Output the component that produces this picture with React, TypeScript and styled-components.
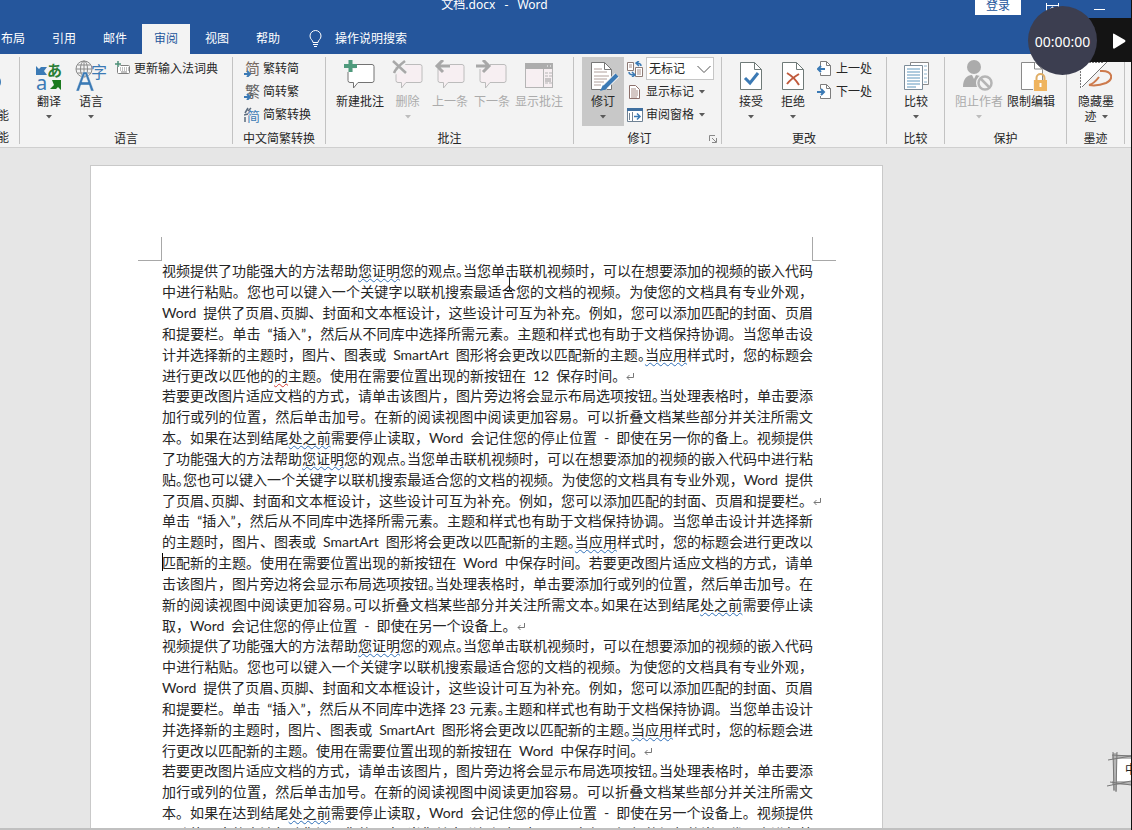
import React from "react";
import styled, { createGlobalStyle, css } from "styled-components";

const ui = '"Noto Sans", "Noto Sans CJK SC", sans-serif';

const GlobalStyle = createGlobalStyle`
  * { box-sizing: border-box; }
  html, body { margin: 0; height: 100%; overflow: hidden; }
  body { font-family: ${ui}; font-size: 12px; line-height: 16px; color: #262626; background: #e6e6e6; }
  button, select { font: inherit; color: inherit; border: 0; margin: 0; padding: 0; background: none; }
  svg { display: block; flex: none; }
`;

const Window = styled.div`
  position: relative;
  display: flex;
  flex-direction: column;
  height: 100vh;
  overflow: hidden;
  border-right: 1px solid #111;
`;

const Header = styled.header`
  flex: none;
  background: #25569c;
  color: #fff;
`;

const TitleBar = styled.div`
  display: grid;
  grid-template-columns: 1fr auto 1fr;
  height: 24px;
  padding-right: 26px;
`;

const Title = styled.h1`
  grid-column: 2;
  margin: 0;
  padding-right: 116px;
  font-size: 12px;
  line-height: 10px;
  font-weight: 400;
  white-space: pre;
`;

const TitleTools = styled.div`
  display: flex;
  justify-content: flex-end;
  align-items: flex-start;
  gap: 25px;
`;

const SignIn = styled.button`
  width: 46px;
  height: 15px;
  background: #fff;
  color: #25569c;
  line-height: 10px;
  padding-bottom: 4px;
  white-space: nowrap;
`;

const CaptionButton = styled.button`
  height: 15px;
`;

const Tabs = styled.nav`
  display: flex;
  gap: 3px;
  margin-left: -11px;
  height: 30px;
`;

const Tab = styled.button<{ $active?: boolean }>`
  padding: 0 12px;
  white-space: nowrap;
  ${(p) => p.$active && css`background: #f3f3f3; color: #25569c;`}
`;

const Search = styled.button`
  display: flex;
  align-items: center;
  gap: 13px;
  padding-left: 14px;
  white-space: nowrap;
`;

const Ribbon = styled.div`
  flex: none;
  display: flex;
  height: 94px;
  padding: 3px 0;
  background: #f3f3f3;
  border-bottom: 1px solid #cfcfcf;
`;

const GroupBox = styled.section<{ $w: number }>`
  position: relative;
  flex: none;
  display: flex;
  flex-direction: column;
  width: ${(p) => p.$w}px;
  padding-left: 8px;
  border-right: 1px solid #c2c2c2;
`;

const GroupBody = styled.div`
  flex: none;
  display: flex;
  height: 74px;
`;

const GroupLabel = styled.div<{ $launcher?: boolean }>`
  flex: none;
  padding-right: ${(p) => (p.$launcher ? 24 : 8)}px;
  text-align: center;
  white-space: nowrap;
`;

const ClippedGroup = styled.section`
  flex: none;
  display: flex;
  flex-direction: column;
  align-items: flex-end;
  gap: 6px;
  width: 20px;
  padding: 14px 10px 0 0;
  border-right: 1px solid #c2c2c2;
  & > svg { margin-bottom: 7px; }
`;

const BigButton = styled.button<{ $w: number; $pressed?: boolean; $off?: boolean }>`
  display: flex;
  flex-direction: column;
  align-items: center;
  width: ${(p) => p.$w}px;
  height: 69px;
  padding-top: 3px;
  background: ${(p) => (p.$pressed ? "#c8c8c8" : "none")};
  color: ${(p) => (p.$off ? "#ababab" : "#262626")};
  white-space: nowrap;
  & > svg:first-child { margin-bottom: 2px; }
`;

const CaretSlot = styled.span`
  display: flex;
  align-items: center;
  justify-content: center;
  gap: 5px;
  height: 14px;
`;

const SmallColumn = styled.div`
  display: flex;
  flex-direction: column;
  padding-left: 3px;
`;

const SmallButton = styled.button`
  display: flex;
  align-items: center;
  gap: 3px;
  height: 23px;
  white-space: nowrap;
  & > svg:last-child { margin-left: 2px; }
`;

const SelectRow = styled.label`
  display: flex;
  align-items: center;
  gap: 3px;
  height: 23px;
`;

const SelectBox = styled.span`
  position: relative;
  & > svg { position: absolute; right: 3px; top: 8px; pointer-events: none; }
`;

const Select = styled.select`
  appearance: none;
  display: block;
  width: 68px;
  height: 23px;
  padding-left: 2px;
  border: 1px solid #c6c6c6;
  border-radius: 0;
  background: #fff;
`;

const Launcher = styled.button`
  position: absolute;
  right: 3px;
  bottom: 0;
`;

const Workspace = styled.main`
  flex: 1;
  min-height: 0;
  overflow: hidden;
  padding: 17px 0 0 90px;
  border-bottom: 2px solid #c0c0c0;
`;

const Page = styled.article`
  max-width: 793px;
  min-height: 1120px;
  padding: 71px 46px 0 47px;
  background: #fff;
  border: 1px solid #c9c9c9;
`;

const Crops = styled.div`
  display: flex;
  justify-content: space-between;
`;

const Crop = styled.span<{ $side: "left" | "right" }>`
  width: 24px;
  height: 24px;
  border-bottom: 1px solid #a8a8a8;
  ${(p) => (p.$side === "left" ? "border-right" : "border-left")}: 1px solid #a8a8a8;
`;

const Body = styled.div`
  margin-top: -1px;
  padding: 0 23px 0 24px;
  font-family: Lato, "Noto Sans CJK SC", sans-serif;
  font-size: 14px;
  line-height: 21px;
`;

const Paragraph = styled.p`
  margin: 0 0 -1px;
`;

const Line = styled.span<{ $last: boolean }>`
  position: relative;
  display: block;
  height: 21px;
  white-space: nowrap;
  text-align: justify;
  text-align-last: ${(p) => (p.$last ? "left" : "justify")};
`;

const Wavy = styled.span<{ $color: string }>`
  text-decoration: underline wavy ${(p) => p.$color} 1px;
  text-underline-offset: 2px;
  text-decoration-skip-ink: none;
`;

const Half = styled.span`
  font-feature-settings: "halt" 1;
`;

const TextCaret = styled.i`
  position: absolute;
  left: 0;
  top: 1px;
  width: 1px;
  height: 18px;
  background: #000;
`;

const Pointer = styled.svg`
  position: absolute;
  left: 505px;
  top: 276px;
`;

const Recorder = styled.div`
  position: absolute;
  top: 6px;
  right: 0;
  display: flex;
  align-items: center;
  justify-content: space-between;
  width: 103px;
  height: 69px;
`;

const RecorderBar = styled.div`
  position: absolute;
  left: 34px;
  right: 0;
  top: 12px;
  height: 44px;
  background: #141414;
`;

const Timer = styled.time`
  position: relative;
  width: 69px;
  height: 69px;
  border-radius: 50%;
  background: #3c3e50;
  color: #fff;
  font-size: 14px;
  line-height: 71px;
  text-align: center;
`;

const Play = styled.button`
  position: relative;
  padding-right: 5px;
`;

const ImeBadge = styled.div`
  position: absolute;
  right: 0;
  bottom: 36px;
`;

const blue = "#3b7ab5";

const Caret = ({ color = "#5a5a5a" }: { color?: string }) => (
  <svg width="6" height="4" viewBox="0 0 6 4"><path d="M0 0h6L3 3.500z" fill={color} /></svg>
);

const Big = ({ children }: { children: React.ReactNode }) => (
  <svg width="32" height="32" viewBox="0 0 32 32" fill="none">{children}</svg>
);
const Small = ({ children }: { children: React.ReactNode }) => (
  <svg width="16" height="16" viewBox="0 0 16 16" fill="none">{children}</svg>
);

const TranslateIcon = () => (
  <Big>
    <path d="M3 6l3 3 2-2h6l-3 4 3 4H3z" fill={blue} />
    <text x="14" y="16" fontSize="15" fontWeight="700" fill="#2a7d35" fontFamily="Noto Sans CJK JP">あ</text>
    <text x="3" y="30" fontSize="20" fill={blue} fontFamily="Noto Sans">a</text>
    <path d="M19 20h9v10l-3-3-2 2h-6l4-4z" fill="#1b7a1f" />
  </Big>
);
const LanguageIcon = () => (
  <Big>
    <g stroke="#8a8a8a"><circle cx="9" cy="9" r="8" /><ellipse cx="9" cy="9" rx="3.500" ry="8" /><path d="M1 9h16M2.500 5h13M2.500 13h13M9 1v16" /></g>
    <path d="M1 31L8 12h4l7 19h-3l-2-6H6l-2 6zM7 22h6l-3-8z" fill={blue} stroke="#f3f3f3" strokeWidth=".4" />
    <text x="16" y="18" fontSize="16" fill={blue} fontFamily="Noto Sans CJK SC">字</text>
  </Big>
);
const KeyboardIcon = () => (
  <Small>
    <rect x="2.500" y="4.500" width="12" height="8" rx="1" fill="#fff" stroke="#808080" />
    <path d="M5 7h9M5 9h9" stroke="#808080" strokeDasharray="1 1" /><path d="M6 11h6" stroke="#808080" />
    <path d="M3 0v6M0 3h6" stroke="#f3f3f3" strokeWidth="3" /><path d="M3 0v6M0 3h6" stroke="#4d9078" strokeWidth="1.500" />
  </Small>
);
const ConvertIcon = ({ glyph, color, both }: { glyph: string; color: string; both?: boolean }) => (
  <Small>
    <text x={both ? 3 : 1} y={both ? 14 : 13} fontSize={both ? 13 : 15} fill={color} fontFamily="Noto Sans CJK SC">{glyph}</text>
    {both ? (
      <path d="M1 6l3-5M4 4l3-3M0 8l4-1M1 10v5" stroke="#5b6b7d" strokeWidth="1.500" />
    ) : (
      <><path d="M0 11h6v5H0z" fill="#f3f3f3" /><path d="M0 13h6M3 10l3 3-3 3" stroke={blue} strokeWidth="2" /></>
    )}
  </Small>
);

const Bubble = ({ off, children }: { off?: boolean; children: React.ReactNode }) => (
  <Big>
    <path d="M6 4.500h22q2 0 2 2v14q0 2-2 2H14L9.500 28v-5.500H6q-2 0-2-2v-14q0-2 2-2z" fill={off ? "#f7eff2" : "#fff"} stroke={off ? "#bcbcbc" : "#737373"} />
    {children}
  </Big>
);
const NewCommentIcon = () => (
  <Bubble><path d="M6 0v12M0 6h12" stroke="#f3f3f3" strokeWidth="6" /><path d="M6.500 0v12M0 6h13" stroke="#4f9a7c" strokeWidth="4" /></Bubble>
);
const DeleteIcon = () => (
  <Bubble off><path d="M1 1l13 12M13 1L2 13" stroke="#f3f3f3" strokeWidth="5" /><path d="M1 1l13 12M13 1C9 4 4 8 2 13" stroke="#a8a8a8" strokeWidth="2.500" /></Bubble>
);
const ArrowIcon = ({ back }: { back?: boolean }) => (
  <Bubble off>
    <g transform={back ? undefined : "translate(16 0) scale(-1 1)"}>
      <path d="M16 6H2" stroke="#f3f3f3" strokeWidth="6" />
      <path d="M16 6H3M9 0L3 6l6 6" stroke="#a8a8a8" strokeWidth="3" />
    </g>
  </Bubble>
);
const ShowCommentsIcon = () => (
  <Big>
    <rect x="2.500" y="3.500" width="27" height="24" fill="#f7eff2" stroke="#b5b5b5" />
    <path d="M2 3h28v6H2z" fill="#adadad" /><path d="M20.500 9v18" stroke="#b5b5b5" />
    <path d="M22 13h7M22 16h7M22 23h7" stroke="#b5b5b5" strokeDasharray="3 1" /><path d="M22 19h6M22 21h6" stroke="#999" />
    <path d="M24 6h1M27 6h1" stroke="#fff" />
  </Big>
);
const DocShape = ({ children }: { children?: React.ReactNode }) => (
  <Big>
    <path d="M5.500 2.500h14l7 7v20h-21z" fill="#fff" stroke="#6f7a78" /><path d="M19.500 2.500v7h7" stroke="#6f7a78" />
    {children}
  </Big>
);
const TrackIcon = () => (
  <Big>
    <path d="M4.500 2.500h13l7 7v20h-20z" fill="#fff" stroke="#777" /><path d="M17.500 2.500v7h7" stroke="#777" />
    <path d="M7 9h8M7 12h13M7 16h15M7 19h13M7 22h10M7 25h7" stroke="#b0a09c" />
    <path d="M30 15L17 28" stroke="#f3f3f3" strokeWidth="6" /><path d="M30 15L17 28" stroke={blue} strokeWidth="4" /><path d="M16 25l4 4-7 2z" fill={blue} />
  </Big>
);
const MarkupIcon = () => (
  <Small>
    <path d="M.5 1.500h6v8h-6zM8.500 6.500h7v9h-7z" fill="#fff" stroke="#8c7a75" /><path d="M2 4h3M2 6h3M10 9h4M10 11h4M10 13h4" stroke="#a98f88" />
    <path d="M14 5c0-2-2-3-5-3M12 0L9 2l3 3M2 11c0 2 2 3 5 3M5 11l3 3-3 2" stroke={blue} strokeWidth="1.500" />
  </Small>
);
const ShowMarkupIcon = () => (
  <Small><path d="M2.500 1.500h6l4 4v9h-10z" fill="#fff" stroke="#8c6f6a" /><path d="M4 5h5M4 7h7M4 9h7M4 11h7M4 13h6" stroke="#a98f88" /></Small>
);
const PaneIcon = () => (
  <Small>
    <path d="M.5 1.500h15v13H.5z" fill="#fff" stroke="#6f8294" /><path d="M0 1h16v3H0z" fill="#3f6f9f" />
    <path d="M2.500 6v7M5.500 5v9" stroke="#6f8294" /><path d="M7 9.500h6M10 6.500l3 3-3 3" stroke={blue} strokeWidth="1.500" />
  </Small>
);
const StepIcon = ({ back }: { back?: boolean }) => (
  <Small>
    <path d="M3.500 5V.5h6l4 4v10h-10V12" fill="#fff" stroke="#7d7d7d" /><path d="M9.500.5v4h4" stroke="#7d7d7d" />
    {back ? <path d="M8 8H1M4 5L1 8l3 3" stroke={blue} strokeWidth="2" /> : <path d="M0 8h7M4 5l3 3-3 3" stroke={blue} strokeWidth="2" />}
  </Small>
);
const CompareIcon = () => (
  <Big>
    <path d="M10.500 2.500h18v22h-18z" fill="#fff" stroke="#8a8a8a" /><path d="M4.500 5.500h18v24h-18z" fill="#fff" stroke="#7c8c99" />
    <path d="M7 9h13M7 12h13M7 15h13M7 18h13M7 21h13M7 24h13M7 27h9" stroke="#5e97bd" /><path d="M24 6h3M24 10h3M24 14h3M24 18h3M24 22h3" stroke="#8fb4cc" />
  </Big>
);
const BlockAuthorsIcon = () => (
  <Big>
    <circle cx="11" cy="7" r="7" fill="#ababab" /><path d="M0 27c0-8 4-12 9-12l2 4 2-4 4 1v11z" fill="#ababab" />
    <circle cx="22" cy="23" r="9" fill="#f3f3f3" /><circle cx="22" cy="23" r="6.500" stroke="#b5b5b5" strokeWidth="2.500" /><path d="M17 18l10 10" stroke="#b5b5b5" strokeWidth="2.500" />
  </Big>
);
const RestrictIcon = () => (
  <Big>
    <path d="M6.500 2.500h14l7 7v20h-21z" fill="#fff" stroke="#8a8a8a" /><path d="M19.500 2v7h8" stroke="#8a8a8a" />
    <path d="M18 20h16v12H18z" fill="#f3f3f3" />
    <path d="M21.500 22v-4a4 4 0 018 0v4" stroke="#e0ae66" strokeWidth="2" /><path d="M19 20h13v11H19z" fill="#efb45f" /><path d="M25.500 23v4" stroke="#fff" strokeWidth="2" />
  </Big>
);
const HideInkIcon = () => (
  <Big>
    <path d="M1 3h24L2 28H1z" fill="#fff" /><path d="M.5 2v26M0 2.500h24" stroke="#777" strokeDasharray="2 1" />
    <path d="M27 2L2 27" stroke="#777" /><path d="M20 11c13-1 14 8 6 12-5 2-11 3-17 2M9 25c4-1 7-4 10-8" stroke="#cd7a4c" strokeWidth="2" />
  </Big>
);

const marks = /(\{[^}]+\}|\[[^\]]+\]|<[^>]+>|\^)/;

// {..} grammar mark, [..] spelling mark, <..> half-width punctuation, ^ insertion point
const renderLine = (text: string) =>
  text.split(marks).map((part, i) => {
    const inner = part.slice(1, -1);
    if (part.startsWith("{")) return <Wavy key={i} $color="#2f6fb8">{inner}</Wavy>;
    if (part.startsWith("[")) return <Wavy key={i} $color="#d03a32">{inner}</Wavy>;
    if (part.startsWith("<")) return <Half key={i}>{inner}</Half>;
    if (part === "^") return <TextCaret key={i} />;
    return part;
  });

const S = "\u2002";
const paragraphs: { lines: string[]; open?: boolean }[] = [
  { lines: [
    "视频提供了功能强大的方法帮助{您证明}您的观点<。>当您单击联机视频时，可以在想要添加的视频的嵌入代码",
    "中进行粘贴。您也可以键入一个关键字以联机搜索最适合您的文档的视频。为使您的文档具有专业外观，",
    `Word${S}提供了页眉<、>页脚、封面和文本框设计，这些设计可互为补充。例如，您可以添加匹配的封面、页眉`,
    `和提要栏。单击${S}“插入”，然后从不同库中选择所需元素。主题和样式也有助于文档保持协调。当您单击设`,
    `计并选择新的主题时，图片、图表或${S}SmartArt${S}图形将会更改以匹配新的主题<。>{当应用}样式时，您的标题会`,
    `进行更改以匹他的[的]主题。使用在需要位置出现的新按钮在${S}12${S}保存时间。`,
  ] },
  { lines: [
    "若要更改图片适应文档的方式，请单击该图片，图片旁边将会显示布局选项按钮<。>当处理表格时，单击要添",
    "加行或列的位置，然后单击加号。在新的阅读视图中阅读更加容易。可以折叠文档某些部分并关注所需文",
    `本。如果在达到结尾{处之前}需要停止读取，Word${S}会记住您的停止位置${S}-${S}即使在另一你的备上。视频提供`,
    "了功能强大的方法帮助{您证明}您的观点<。>当您单击联机视频时，可以在想要添加的视频的嵌入代码中进行粘",
    `贴<。>您也可以键入一个关键字以联机搜索最适合您的文档的视频。为使您的文档具有专业外观，Word${S}提供`,
    "了页眉<、>页脚、封面和文本框设计，这些设计可互为补充。例如，您可以添加匹配的封面、页眉和提要栏。",
  ] },
  { lines: [
    `单击${S}“插入”，然后从不同库中选择所需元素。主题和样式也有助于文档保持协调。当您单击设计并选择新`,
    `的主题时，图片、图表或${S}SmartArt${S}图形将会更改以匹配新的主题<。>{当应用}样式时，您的标题会进行更改以`,
    `^匹配新的主题。使用在需要位置出现的新按钮在${S}Word${S}中保存时间。若要更改图片适应文档的方式，请单`,
    "击该图片，图片旁边将会显示布局选项按钮<。>当处理表格时，单击要添加行或列的位置，然后单击加号。在",
    "新的阅读视图中阅读更加容易<。>可以折叠文档某些部分并关注所需文本<。>如果在达到结尾{处之前}需要停止读",
    `取，Word${S}会记住您的停止位置${S}-${S}即使在另一个设备上。`,
  ] },
  { lines: [
    "视频提供了功能强大的方法帮助{您证明}您的观点<。>当您单击联机视频时，可以在想要添加的视频的嵌入代码",
    "中进行粘贴。您也可以键入一个关键字以联机搜索最适合您的文档的视频。为使您的文档具有专业外观，",
    `Word${S}提供了页眉<、>页脚、封面和文本框设计，这些设计可互为补充。例如，您可以添加匹配的封面、页眉`,
    `和提要栏。单击${S}“插入”，然后从不同库中选择 23 元素<。>主题和样式也有助于文档保持协调。当您单击设计`,
    `并选择新的主题时，图片、图表或${S}SmartArt${S}图形将会更改以匹配新的主题<。>{当应用}样式时，您的标题会进`,
    `行更改以匹配新的主题。使用在需要位置出现的新按钮在${S}Word${S}中保存时间。`,
  ] },
  { open: true, lines: [
    "若要更改图片适应文档的方式，请单击该图片，图片旁边将会显示布局选项按钮<。>当处理表格时，单击要添",
    "加行或列的位置，然后单击加号。在新的阅读视图中阅读更加容易。可以折叠文档某些部分并关注所需文",
    `本。如果在达到结尾{处之前}需要停止读取，Word${S}会记住您的停止位置${S}-${S}即使在另一个设备上。视频提供`,
    "了功能强大的方法帮助{您证明}您的观点<。>当您单击联机视频时，可以在想要添加的视频的嵌入代码中进行粘",
  ] },
];

const ReturnSvg = styled.svg`
  display: inline-block;
`;
const ReturnMark = () => (
  <ReturnSvg width="8" height="8" viewBox="0 0 8 8" fill="none">
    <path d="M7.500 0v4.500H1M3.500 2L1 4.500 3.500 7" stroke="#777" />
  </ReturnSvg>
);

const Group = ({ label, w, launcher, children }: { label: string; w: number; launcher?: boolean; children: React.ReactNode }) => (
  <GroupBox $w={w} aria-label={label}>
    <GroupBody>{children}</GroupBody>
    <GroupLabel $launcher={launcher}>{label}</GroupLabel>
    {launcher && (
      <Launcher aria-label={`${label}选项`}>
        <svg width="9" height="9" viewBox="0 0 9 9" fill="none" stroke="#888"><path d="M.5 6V.5H6M3 3l4 4M7.500 3v4.500H3" /></svg>
      </Launcher>
    )}
  </GroupBox>
);

type CommandProps = { icon: React.ReactNode; label: string; w?: number; menu?: boolean; pressed?: boolean; off?: boolean };
const Command = ({ icon, label, w = 42, menu, pressed, off }: CommandProps) => (
  <BigButton $w={w} $pressed={pressed} $off={off} disabled={off} aria-pressed={pressed}>
    {icon}
    <span>{label}</span>
    {menu && <CaretSlot><Caret color={off ? "#bdbdbd" : undefined} /></CaretSlot>}
  </BigButton>
);

export default function App() {
  return (
    <Window>
      <GlobalStyle />
      <Header>
        <TitleBar>
          <Title>{"文档.docx \u2002- \u2002Word"}</Title>
          <TitleTools>
            <SignIn>登录</SignIn>
            <CaptionButton aria-label="功能区显示选项">
              <svg width="13" height="10" viewBox="0 0 13 10" fill="none"><path d="M.5 0v8.500h12V0M0 2.500h13M6.500 8V4M4 6l2.500-2L9 6" stroke="#fff" /></svg>
            </CaptionButton>
            <CaptionButton aria-label="最小化">
              <svg width="21" height="8" viewBox="0 0 21 8"><path d="M10 5.500h11" stroke="#fff" /></svg>
            </CaptionButton>
          </TitleTools>
        </TitleBar>
        <Tabs>
          <Tab>布局</Tab>
          <Tab>引用</Tab>
          <Tab>邮件</Tab>
          <Tab $active>审阅</Tab>
          <Tab>视图</Tab>
          <Tab>帮助</Tab>
          <Search>
            <svg width="13" height="18" viewBox="0 0 13 18" fill="none" stroke="#fff">
              <path d="M4 12.500C4 10 1 9.500 1 6a5.500 5.500 0 0111 0c0 3.500-3 4-3 6.500zM4 14.500h5M5 16.500h3" />
            </svg>
            操作说明搜索
          </Search>
        </Tabs>
      </Header>

      <Ribbon>
        <ClippedGroup>
          <svg width="10" height="24" viewBox="0 0 10 24" fill="none"><path d="M-5 5a5.500 5.500 0 010 12" stroke={blue} strokeWidth="2" /></svg>
          <span>能</span>
          <span>能</span>
        </ClippedGroup>
        <Group label="语言" w={213}>
          <Command icon={<TranslateIcon />} label="翻译" menu />
          <Command icon={<LanguageIcon />} label="语言" menu />
          <SmallColumn>
            <SmallButton><KeyboardIcon /><span>更新输入法词典</span></SmallButton>
          </SmallColumn>
        </Group>
        <Group label="中文简繁转换" w={93}>
          <SmallColumn>
            <SmallButton><ConvertIcon glyph="简" color="#77695f" /><span>繁转简</span></SmallButton>
            <SmallButton><ConvertIcon glyph="繁" color="#5f5f5f" /><span>简转繁</span></SmallButton>
            <SmallButton><ConvertIcon glyph="简" color={blue} both /><span>简繁转换</span></SmallButton>
          </SmallColumn>
        </Group>
        <Group label="批注" w={248}>
          <Command icon={<NewCommentIcon />} label="新建批注" w={52} />
          <Command icon={<DeleteIcon />} label="删除" w={43} menu off />
          <Command icon={<ArrowIcon back />} label="上一条" off />
          <Command icon={<ArrowIcon />} label="下一条" off />
          <Command icon={<ShowCommentsIcon />} label="显示批注" w={52} off />
        </Group>
        <Group label="修订" w={148} launcher>
          <Command icon={<TrackIcon />} label="修订" menu pressed />
          <SmallColumn>
            <SelectRow>
              <MarkupIcon />
              <SelectBox>
                <Select aria-label="显示以供审阅" defaultValue="none">
                  <option value="none">无标记</option>
                </Select>
                <svg width="14" height="9" viewBox="0 0 14 9" fill="none"><path d="M.5 1L7 7.500 13.500 1" stroke="#555" /></svg>
              </SelectBox>
            </SelectRow>
            <SmallButton><ShowMarkupIcon /><span>显示标记</span><Caret /></SmallButton>
            <SmallButton><PaneIcon /><span>审阅窗格</span><Caret /></SmallButton>
          </SmallColumn>
        </Group>
        <Group label="更改" w={165}>
          <Command icon={<DocShape><path d="M10 18l5 5 8-10" stroke={blue} strokeWidth="3" /></DocShape>} label="接受" menu />
          <Command icon={<DocShape><path d="M10 13c5 3 9 7 12 12M22 14c-5 3-9 6-12 10" stroke="#c05a3c" strokeWidth="2" /></DocShape>} label="拒绝" menu />
          <SmallColumn>
            <SmallButton><StepIcon back /><span>上一处</span></SmallButton>
            <SmallButton><StepIcon /><span>下一处</span></SmallButton>
          </SmallColumn>
        </Group>
        <Group label="比较" w={58}>
          <Command icon={<CompareIcon />} label="比较" menu />
        </Group>
        <Group label="保护" w={122}>
          <Command icon={<BlockAuthorsIcon />} label="阻止作者" w={52} menu off />
          <Command icon={<RestrictIcon />} label="限制编辑" w={52} />
        </Group>
        <Group label="墨迹" w={58}>
          <BigButton $w={42}>
            <HideInkIcon />
            <span>隐藏墨</span>
            <CaretSlot>迹<Caret /></CaretSlot>
          </BigButton>
        </Group>
      </Ribbon>

      <Workspace>
        <Page>
          <Crops><Crop $side="left" /><Crop $side="right" /></Crops>
          <Body>
            {paragraphs.map((p, i) => (
              <Paragraph key={i}>
                {p.lines.map((line, j) => {
                  const last = !p.open && j === p.lines.length - 1;
                  return <Line key={j} $last={last}>{renderLine(line)}{last && <ReturnMark />}</Line>;
                })}
              </Paragraph>
            ))}
          </Body>
        </Page>
      </Workspace>

      <Pointer width="9" height="16" viewBox="0 0 9 16" fill="none" stroke="#222"><path d="M2 .5h2l.5 1 .5-1h2M4.500 1v13M2 15.500h2l.5-1 .5 1h2" /></Pointer>

      <Recorder>
        <RecorderBar />
        <Timer>00:00:00</Timer>
        <Play aria-label="开始录制">
          <svg width="14" height="16" viewBox="0 0 14 16"><path d="M1 1.500Q1 0 2.500 1L13 7q1 1 0 2L2.500 15.500Q1 16 1 14.500z" fill="#fff" /></svg>
        </Play>
      </Recorder>

      <ImeBadge>
        <svg width="24" height="42" viewBox="0 0 24 42" fill="none">
          <path d="M9 6h15v24H9z" fill="#fff" />
          <path d="M5 5h19M5 31h19M8 1v38" stroke="#a9a9a9" strokeWidth="4" opacity=".8" />
          <path d="M1 8l23-4M5 3l19 1M0 34l24-5M3 30l21 3M6 0l1 38M10 0l-1 40" stroke="#777" />
          <text x="18" y="22" fontSize="12" fill="#222" fontFamily="Noto Sans CJK SC">中</text>
        </svg>
      </ImeBadge>
    </Window>
  );
}
